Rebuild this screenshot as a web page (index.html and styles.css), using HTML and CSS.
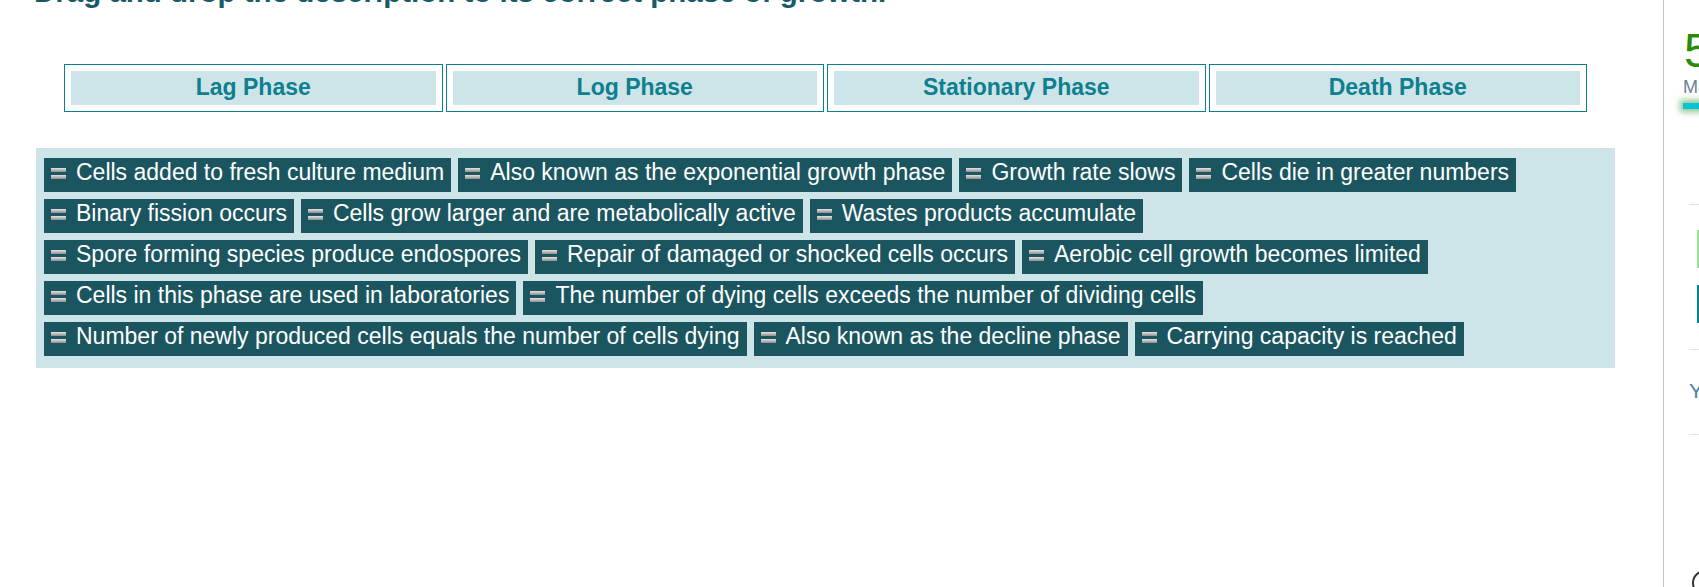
FILE: index.html
```html
<!DOCTYPE html>
<html lang="en">
<head>
<meta charset="utf-8">
<title>Phases of growth</title>
<link rel="stylesheet" href="styles.css">
</head>
<body>
<div class="page">
  <main class="main">
    <h1 class="title">Drag and drop the description to its correct phase of growth.</h1>
    <div class="phases">
      <div class="phase"><div class="phase-label">Lag Phase</div></div>
      <div class="phase"><div class="phase-label">Log Phase</div></div>
      <div class="phase"><div class="phase-label">Stationary Phase</div></div>
      <div class="phase"><div class="phase-label">Death Phase</div></div>
    </div>
    <div class="pool">
      <div class="tile"><span class="grip"></span><span class="tile-text">Cells added to fresh culture medium</span></div>
      <div class="tile"><span class="grip"></span><span class="tile-text">Also known as the exponential growth phase</span></div>
      <div class="tile"><span class="grip"></span><span class="tile-text">Growth rate slows</span></div>
      <div class="tile"><span class="grip"></span><span class="tile-text">Cells die in greater numbers</span></div>
      <div class="tile"><span class="grip"></span><span class="tile-text">Binary fission occurs</span></div>
      <div class="tile"><span class="grip"></span><span class="tile-text">Cells grow larger and are metabolically active</span></div>
      <div class="tile"><span class="grip"></span><span class="tile-text">Wastes products accumulate</span></div>
      <div class="tile"><span class="grip"></span><span class="tile-text">Spore forming species produce endospores</span></div>
      <div class="tile"><span class="grip"></span><span class="tile-text">Repair of damaged or shocked cells occurs</span></div>
      <div class="tile"><span class="grip"></span><span class="tile-text">Aerobic cell growth becomes limited</span></div>
      <div class="tile"><span class="grip"></span><span class="tile-text">Cells in this phase are used in laboratories</span></div>
      <div class="tile"><span class="grip"></span><span class="tile-text">The number of dying cells exceeds the number of dividing cells</span></div>
      <div class="tile"><span class="grip"></span><span class="tile-text">Number of newly produced cells equals the number of cells dying</span></div>
      <div class="tile"><span class="grip"></span><span class="tile-text">Also known as the decline phase</span></div>
      <div class="tile"><span class="grip"></span><span class="tile-text">Carrying capacity is reached</span></div>
    </div>
  </main>
  <aside class="side">
    <div class="score">5</div>
    <div class="score-label">Mastery</div>
    <div class="meter"></div>
    <div class="rule rule-first"></div>
    <div class="swatch swatch-green"></div>
    <div class="swatch swatch-teal"></div>
    <div class="rule rule-second"></div>
    <div class="side-text">Your progress</div>
    <div class="rule rule-third"></div>
    <div class="help-icon"></div>
  </aside>
</div>
</body>
</html>
```

FILE: styles.css
```css
html, body {
  margin: 0;
  height: 100%;
  overflow: hidden;
  background: #ffffff;
  font-family: "Liberation Sans", Arial, sans-serif;
}

.page {
  display: flex;
  height: 587px;
}

.main {
  flex: 0 0 1663px;
  width: 1663px;
  box-sizing: border-box;
  padding: 0 48px 0 36px;
}

.title {
  margin: -26px 0 0 -2px;
  font-size: 29.5px;
  line-height: 36px;
  font-weight: bold;
  color: #175a68;
  white-space: nowrap;
}

.phases {
  display: grid;
  grid-template-columns: repeat(4, 1fr);
  column-gap: 3px;
  margin: 54px 28px 0;
}

.phase {
  border: 1px solid #0e7f8c;
  padding: 6px;
}

.phase-label {
  background: #cde5e8;
  color: #0e7f8e;
  font-weight: bold;
  font-size: 23px;
  line-height: 32px;
  padding-bottom: 2px;
  text-align: center;
}

.pool {
  margin-top: 36px;
  background: #cde5e8;
  padding: 10px 28px 12px 8px;
  display: flex;
  flex-wrap: wrap;
  gap: 7px;
}

.tile {
  display: flex;
  align-items: flex-start;
  box-sizing: border-box;
  height: 34px;
  padding: 1px 7px 7px 7px;
  background: #1b5660;
  color: #ffffff;
  font-size: 23px;
  line-height: 26px;
  white-space: nowrap;
}

.grip {
  flex: 0 0 15px;
  width: 15px;
  height: 11px;
  margin: 9px 10px 0 0;
  background:
    linear-gradient(#e4e4e4, #8e8e8e) top / 100% 4px no-repeat,
    linear-gradient(#e4e4e4, #8e8e8e) bottom / 100% 4px no-repeat;
}

.side {
  flex: 0 0 300px;
  border-left: 1px solid #c4c4c4;
  padding-left: 19px;
}

.score {
  margin: 27px 0 0 1px;
  font-size: 48px;
  line-height: 48px;
  color: #2a8a0a;
}

.score-label {
  margin-top: 2px;
  font-size: 18px;
  line-height: 20px;
  color: #6a8494;
}

.meter {
  margin-top: 6px;
  width: 120px;
  height: 6px;
  background: #00c6da;
  box-shadow: 0 0 6px 3px rgba(50, 150, 40, 0.55);
}

.rule {
  height: 1px;
  margin-left: 6px;
  background: #e2e2e2;
}

.rule-first { margin-top: 95px; }
.rule-second { margin-top: 26px; }
.rule-third { margin-top: 31px; }

.swatch {
  width: 60px;
  height: 38px;
  margin-left: 14px;
}

.swatch-green {
  margin-top: 25px;
  background: #99e39a;
}

.swatch-teal {
  margin-top: 17px;
  background: #0f7e8d;
}

.side-text {
  margin: 29px 0 0 6px;
  font-size: 21px;
  line-height: 24px;
  color: #4d7ea0;
}

.help-icon {
  width: 22px;
  height: 22px;
  margin: 135px 0 0 9px;
  border: 2px solid #333333;
  border-radius: 50%;
}
```
